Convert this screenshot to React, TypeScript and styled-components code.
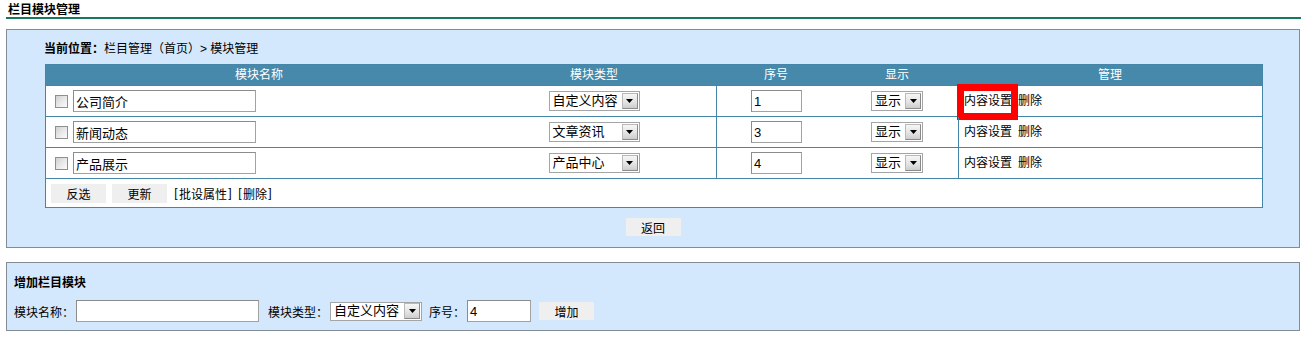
import React from 'react';
import styled, { createGlobalStyle } from 'styled-components';

const Global = createGlobalStyle`
  html, body { margin: 0; padding: 0; background: #ffffff; }
  body {
    font-family: "Liberation Sans", "Noto Sans CJK SC", sans-serif;
    font-size: 12px;
    color: #000;
  }
  * { box-sizing: border-box; }
`;

const Page = styled.div`
  padding-left: 6px;
  width: 1311px;
`;

const TitleBar = styled.div`
  width: 1295px;
  height: 19px;
  line-height: 20px;
  padding-left: 2px;
  border-bottom: 2px solid #17785d;
  font-weight: bold;
  font-size: 12px;
`;

const Panel = styled.div<{ $gap: number }>`
  width: 1294px;
  margin-top: ${(p) => p.$gap}px;
  border: 1px solid #838c94;
  background: #d3e8fc;
`;

const MainPanel = styled(Panel)`
  padding: 9px 0 11px 0;
`;

const AddPanel = styled(Panel)`
  padding: 10px 7px 8px 7px;
`;

const Breadcrumb = styled.div`
  padding-left: 37px;
  line-height: 20px;
  height: 20px;
`;

const Strong = styled.span`
  font-weight: bold;
`;

const Table = styled.div`
  width: 1218px;
  margin: 5px 0 0 38px;
  border: 1px solid #4585a7;
  background: #ffffff;
`;

const cols = '426px 244px 120px 122px 304px';

const HeadRow = styled.div`
  display: grid;
  grid-template-columns: ${cols};
  height: 20px;
  background: #4689ab;
  color: #ffffff;
`;

const HeadCell = styled.div`
  display: flex;
  align-items: center;
  justify-content: center;
  line-height: 20px;
`;

const Row = styled.div`
  display: grid;
  grid-template-columns: ${cols};
  height: 31px;
  border-top: 1px solid #4585a7;
`;

const Cell = styled.div<{ $divider?: boolean }>`
  position: relative;
  display: flex;
  align-items: center;
  justify-content: center;
  border-left: ${(p) => (p.$divider ? '1px solid #4585a7' : 'none')};
`;

const NameCell = styled(Cell)`
  justify-content: flex-start;
  padding-left: 9px;
  gap: 5px;
`;

const ManageCell = styled(Cell)`
  justify-content: flex-start;
  padding-left: 5px;
  gap: 6px;
`;

const Check = styled.span`
  display: inline-block;
  width: 13px;
  height: 13px;
  border: 1px solid #8e8f8f;
  background: linear-gradient(135deg, #cfd0d0 0%, #e8e8e8 50%, #fbfbfb 100%);
`;

const TextBox = styled.input<{ $w: number; $h?: number }>`
  width: ${(p) => p.$w}px;
  height: ${(p) => p.$h ?? 22}px;
  border: 1px solid #a2a2a2;
  border-top-color: #8c8c8c;
  border-left-color: #8c8c8c;
  background: #ffffff;
  padding: 0 2px;
  margin: 0;
  font-family: "Liberation Sans", "Noto Sans CJK SC", sans-serif;
  font-size: 13px;
  color: #000;
  outline: none;
`;

const SelectBox = styled.span<{ $w: number; $h?: number }>`
  display: inline-flex;
  align-items: center;
  justify-content: space-between;
  width: ${(p) => p.$w}px;
  height: ${(p) => p.$h ?? 20}px;
  border: 1px solid #a5a5a5;
  background: #ffffff;
  padding: 0 1px 0 3px;
  font-size: 13px;
  white-space: nowrap;
`;

const SelectText = styled.span`
  line-height: 16px;
`;

const ArrowBtn = styled.span`
  display: inline-flex;
  align-items: center;
  justify-content: center;
  width: 16px;
  height: 16px;
  flex: none;
  border: 1px solid #8a8a8a;
  border-top-color: #b9b9b9;
  border-left-color: #b9b9b9;
  background: linear-gradient(180deg, #f6f6f6 0%, #e2e2e2 60%, #cdcdcd 100%);
`;

const Arrow = () => (
  <svg width="7" height="4" viewBox="0 0 7 4">
    <path d="M0 0 H7 L3.5 4 Z" fill="#000" />
  </svg>
);

const Select: React.FC<{ w: number; h?: number; label: string }> = ({ w, h, label }) => (
  <SelectBox $w={w} $h={h}>
    <SelectText>{label}</SelectText>
    <ArrowBtn>
      <Arrow />
    </ArrowBtn>
  </SelectBox>
);

const Link = styled.span`
  line-height: 16px;
  cursor: pointer;
`;

const Highlight = styled.span`
  position: absolute;
  left: -2px;
  top: -2px;
  width: 61px;
  height: 36px;
  border: 7px solid #ff0000;
  pointer-events: none;
`;

const FootRow = styled.div`
  display: flex;
  align-items: center;
  height: 29px;
  border-top: 1px solid #4585a7;
  padding-left: 5px;
  gap: 6px;
`;

const Btn = styled.button<{ $h?: number; $ml?: number }>`
  width: 55px;
  height: ${(p) => p.$h ?? 19}px;
  margin-left: ${(p) => p.$ml ?? 0}px;
  border: none;
  background: #efefef;
  padding: 0;
  font-family: "Liberation Sans", "Noto Sans CJK SC", sans-serif;
  font-size: 12px;
  color: #000;
`;

const Batch = styled.span`
  display: inline-flex;
  align-items: center;
  gap: 4px;
`;

const BatchLink = styled.span`
  display: inline-flex;
  align-items: center;
`;

const Bracket = styled.span`
  display: inline-block;
  width: 6px;
  text-align: center;
`;

const Center = styled.div`
  display: flex;
  justify-content: center;
  margin-top: 10px;
`;

const AddTitle = styled.div`
  font-weight: bold;
  line-height: 20px;
  height: 20px;
`;

const FormRow = styled.div`
  display: flex;
  align-items: center;
  margin-top: 7px;
  height: 22px;
`;

const Label = styled.span<{ $ml?: number }>`
  margin-left: ${(p) => p.$ml ?? 0}px;
  margin-right: 2px;
  white-space: nowrap;
`;

const rows = [
  { name: '公司简介', type: '自定义内容', order: '1' },
  { name: '新闻动态', type: '文章资讯', order: '3' },
  { name: '产品展示', type: '产品中心', order: '4' },
];

const BL: React.FC<{ text: string }> = ({ text }) => (
  <BatchLink>
    <Bracket>[</Bracket>
    {text}
    <Bracket>]</Bracket>
  </BatchLink>
);

export default function App() {
  return (
    <Page>
      <Global />
      <TitleBar>栏目模块管理</TitleBar>

      <MainPanel $gap={10}>
        <Breadcrumb>
          <Strong>当前位置：</Strong>栏目管理（首页）&gt; 模块管理
        </Breadcrumb>
        <Table>
          <HeadRow>
            <HeadCell>模块名称</HeadCell>
            <HeadCell>模块类型</HeadCell>
            <HeadCell>序号</HeadCell>
            <HeadCell>显示</HeadCell>
            <HeadCell>管理</HeadCell>
          </HeadRow>
          {rows.map((r, i) => (
            <Row key={r.name}>
              <NameCell>
                <Check />
                <TextBox $w={183} defaultValue={r.name} readOnly />
              </NameCell>
              <Cell>
                <Select w={91} label={r.type} />
              </Cell>
              <Cell $divider>
                <TextBox $w={51} defaultValue={r.order} readOnly />
              </Cell>
              <Cell>
                <Select w={52} label="显示" />
              </Cell>
              <ManageCell $divider>
                <Link>内容设置</Link>
                <Link>删除</Link>
                {i === 0 && <Highlight />}
              </ManageCell>
            </Row>
          ))}
          <FootRow>
            <Btn>反选</Btn>
            <Btn>更新</Btn>
            <Batch>
              <BL text="批设属性" />
              <BL text="删除" />
            </Batch>
          </FootRow>
        </Table>
        <Center>
          <Btn $h={18}>返回</Btn>
        </Center>
      </MainPanel>

      <AddPanel $gap={14}>
        <AddTitle>增加栏目模块</AddTitle>
        <FormRow>
          <Label>模块名称：</Label>
          <TextBox $w={183} readOnly />
          <Label $ml={9}>模块类型：</Label>
          <Select w={92} h={19} label="自定义内容" />
          <Label $ml={7}>序号：</Label>
          <TextBox $w={64} defaultValue="4" readOnly />
          <Btn $h={18} $ml={8}>增加</Btn>
        </FormRow>
      </AddPanel>
    </Page>
  );
}
